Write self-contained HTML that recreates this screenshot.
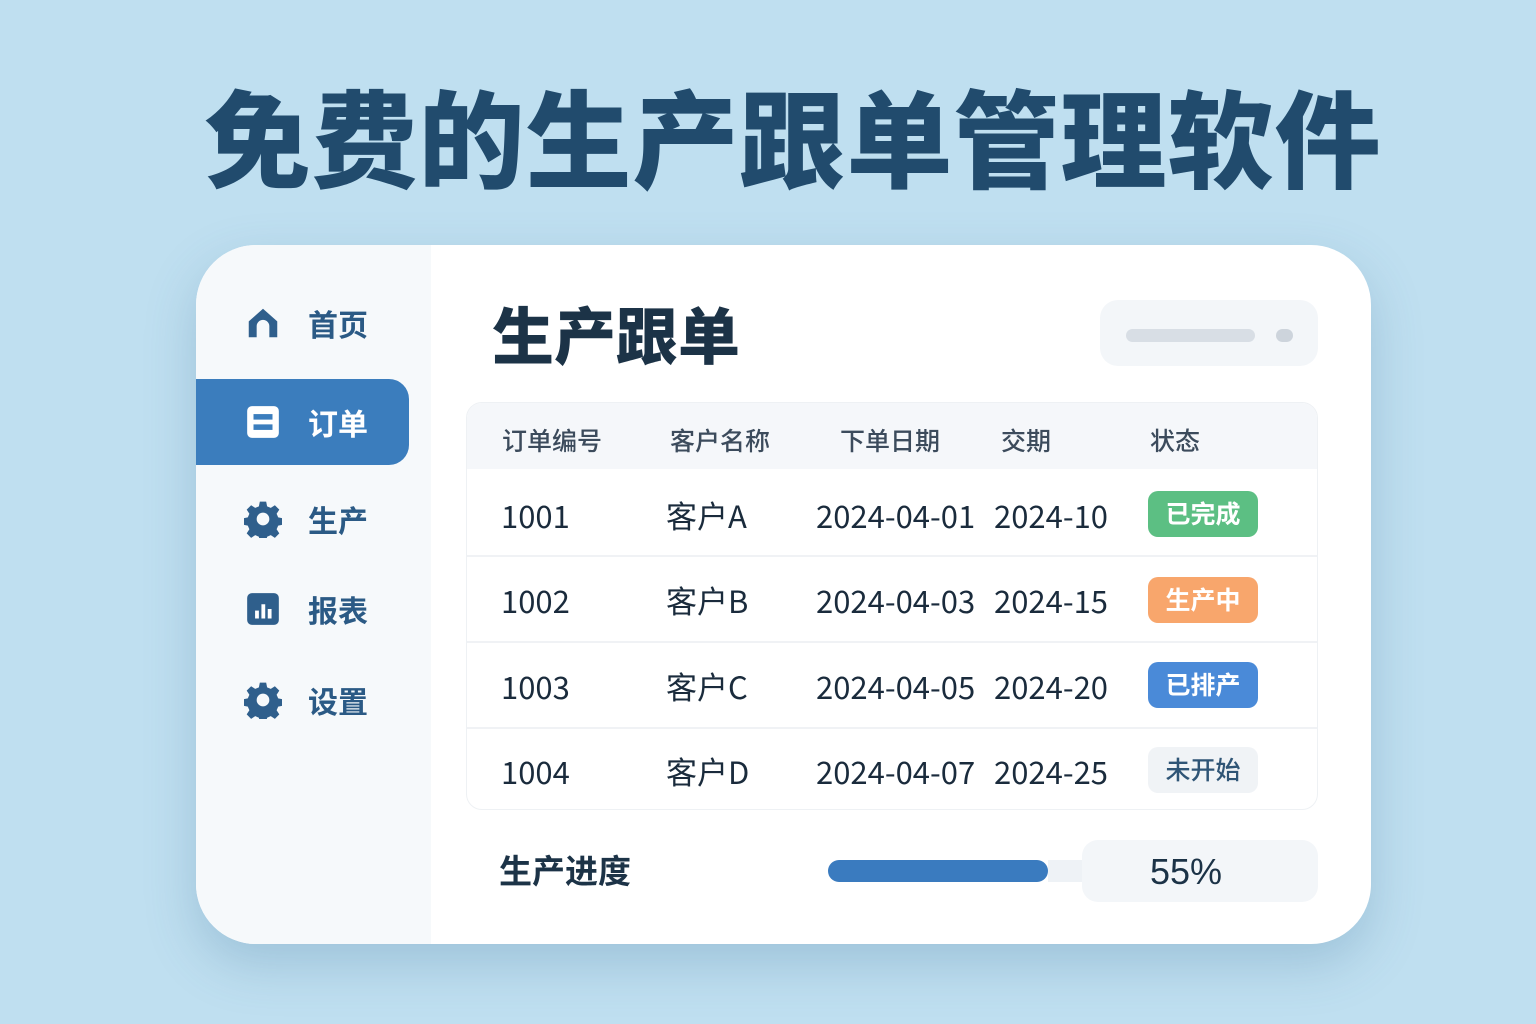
<!DOCTYPE html>
<html><head><meta charset="utf-8"><style>
*{margin:0;padding:0;box-sizing:border-box}
body{width:1536px;height:1024px;background:#bfdff0;font-family:"Liberation Sans","Noto Sans CJK SC",sans-serif;position:relative;overflow:hidden}
.abs{position:absolute}
h1{position:absolute;left:0;width:1536px;top:84px;text-align:center;font-size:106px;font-weight:900;color:#214b6d;letter-spacing:1px;padding-left:50px;line-height:120px}
.card{left:196px;top:245px;width:1175px;height:699px;background:#fff;border-radius:60px;box-shadow:0 20px 50px rgba(60,110,150,.25);overflow:hidden}
.side{left:0;top:0;width:235px;height:699px;background:#f6f9fb}
.nav{position:absolute;left:0;width:213px;height:86px;display:flex;align-items:center;padding-left:48px;font-size:30px;font-weight:700;color:#2b5a85}
.nav svg{width:38px;height:38px;margin-right:26px}
.active{background:#3b7dbd;color:#fff;border-radius:0 20px 20px 0}
.t{color:#1a2b3c;font-size:31px;font-family:"Noto Sans CJK SC","Liberation Sans",sans-serif;line-height:40px}
.hd{color:#3c4b5c;font-size:25px;font-weight:500}
.badge{position:absolute;left:952px;width:110px;height:46px;border-radius:10px;color:#fff;font-size:25px;font-weight:700;text-align:center;line-height:48px}
</style></head><body>
<h1>免费的生产跟单管理软件</h1>
<div class="abs card">
 <div class="abs side">
  <div class="nav" style="top:35px"><svg viewBox="0 0 24 24"><path d="M3 11L12 3l9 8v10h-5v-7a4 4 0 0 0-8 0v7H3z" fill="#2f5f8c"/></svg>首页</div>
  <div class="nav active" style="top:134px"><svg viewBox="0 0 24 24"><rect x="2" y="2" width="20" height="20" rx="3" fill="#fff"/><rect x="6" y="7" width="12" height="3.5" fill="#3b7dbd"/><rect x="6" y="13.5" width="12" height="3.5" fill="#3b7dbd"/></svg>订单</div>
  <div class="nav" style="top:231px"><svg viewBox="0 0 24 24"><path fill="#2f5f8c" d="M10 1h4l.6 3 2.3 1 2.6-1.7 2.8 2.8-1.7 2.6 1 2.3 3 .6v4l-3 .6-1 2.3 1.7 2.6-2.8 2.8-2.6-1.7-2.3 1-.6 3h-4l-.6-3-2.3-1-2.6 1.7-2.8-2.8 1.7-2.6-1-2.3-3-.6v-4l3-.6 1-2.3L1.7 6.1 4.5 3.3l2.6 1.7 2.3-1zM12 8a4 4 0 1 0 0 8 4 4 0 0 0 0-8z"/></svg>生产</div>
  <div class="nav" style="top:321px"><svg viewBox="0 0 24 24"><rect x="2" y="2" width="20" height="20" rx="3" fill="#2f5f8c"/><rect x="7" y="13" width="2.4" height="5" fill="#fff"/><rect x="11" y="9" width="2.4" height="9" fill="#fff"/><rect x="15" y="12" width="2.4" height="6" fill="#fff"/></svg>报表</div>
  <div class="nav" style="top:412px"><svg viewBox="0 0 24 24"><path fill="#2f5f8c" d="M10 1h4l.6 3 2.3 1 2.6-1.7 2.8 2.8-1.7 2.6 1 2.3 3 .6v4l-3 .6-1 2.3 1.7 2.6-2.8 2.8-2.6-1.7-2.3 1-.6 3h-4l-.6-3-2.3-1-2.6 1.7-2.8-2.8 1.7-2.6-1-2.3-3-.6v-4l3-.6 1-2.3L1.7 6.1 4.5 3.3l2.6 1.7 2.3-1zM12 8a4 4 0 1 0 0 8 4 4 0 0 0 0-8z"/></svg>设置</div>
 </div>
 <div class="abs" style="left:296px;top:42px;font-size:62px;font-weight:900;color:#1c3347">生产跟单</div>
 <div class="abs" style="left:904px;top:55px;width:218px;height:66px;background:#f3f6f9;border-radius:18px"></div>
 <div class="abs" style="left:930px;top:84px;width:129px;height:13px;background:#d8dee5;border-radius:7px"></div>
 <div class="abs" style="left:1080px;top:84px;width:17px;height:13px;background:#cdd4dc;border-radius:7px"></div>
 <div class="abs" style="left:270px;top:157px;width:852px;height:408px;border-radius:16px;border:1px solid #eef1f4;overflow:hidden">
  <div class="abs" style="left:0;top:0;width:852px;height:66px;background:#f5f7fa"></div>
  <div class="abs" style="left:0;top:152px;width:852px;height:2px;background:#f0f2f5"></div>
  <div class="abs" style="left:0;top:238px;width:852px;height:2px;background:#f0f2f5"></div>
  <div class="abs" style="left:0;top:324px;width:852px;height:2px;background:#f0f2f5"></div>
 </div>
 <div class="abs hd" style="left:306px;top:177px">订单编号</div>
 <div class="abs hd" style="left:474px;top:177px">客户名称</div>
 <div class="abs hd" style="left:644px;top:177px">下单日期</div>
 <div class="abs hd" style="left:805px;top:177px">交期</div>
 <div class="abs hd" style="left:954px;top:177px">状态</div>

 <div class="abs t" style="left:305px;top:250px">1001</div><div class="abs t" style="left:470px;top:250px">客户A</div><div class="abs t" style="left:620px;top:250px">2024-04-01</div><div class="abs t" style="left:798px;top:250px">2024-10</div>
 <div class="badge" style="top:246px;background:#5cbf83">已完成</div>
 <div class="abs t" style="left:305px;top:335px">1002</div><div class="abs t" style="left:470px;top:335px">客户B</div><div class="abs t" style="left:620px;top:335px">2024-04-03</div><div class="abs t" style="left:798px;top:335px">2024-15</div>
 <div class="badge" style="top:332px;background:#f8a66c">生产中</div>
 <div class="abs t" style="left:305px;top:421px">1003</div><div class="abs t" style="left:470px;top:421px">客户C</div><div class="abs t" style="left:620px;top:421px">2024-04-05</div><div class="abs t" style="left:798px;top:421px">2024-20</div>
 <div class="badge" style="top:417px;background:#4a8ad8">已排产</div>
 <div class="abs t" style="left:305px;top:506px">1004</div><div class="abs t" style="left:470px;top:506px">客户D</div><div class="abs t" style="left:620px;top:506px">2024-04-07</div><div class="abs t" style="left:798px;top:506px">2024-25</div>
 <div class="badge" style="top:502px;background:#f0f3f6;color:#2f5576;font-weight:500">未开始</div>

 <div class="abs" style="left:303px;top:600px;font-size:33px;font-weight:700;color:#1c3347">生产进度</div>
 <div class="abs" style="left:632px;top:615px;width:220px;height:22px;background:#3a7bbf;border-radius:11px"></div>
 <div class="abs" style="left:852px;top:615px;width:40px;height:22px;background:#eef2f6"></div>
 <div class="abs" style="left:886px;top:595px;width:236px;height:62px;background:#f3f6f9;border-radius:16px"></div>
 <div class="abs" style="left:954px;top:606px;font-size:36px;color:#1c3347">55%</div>
</div>
</body></html>
